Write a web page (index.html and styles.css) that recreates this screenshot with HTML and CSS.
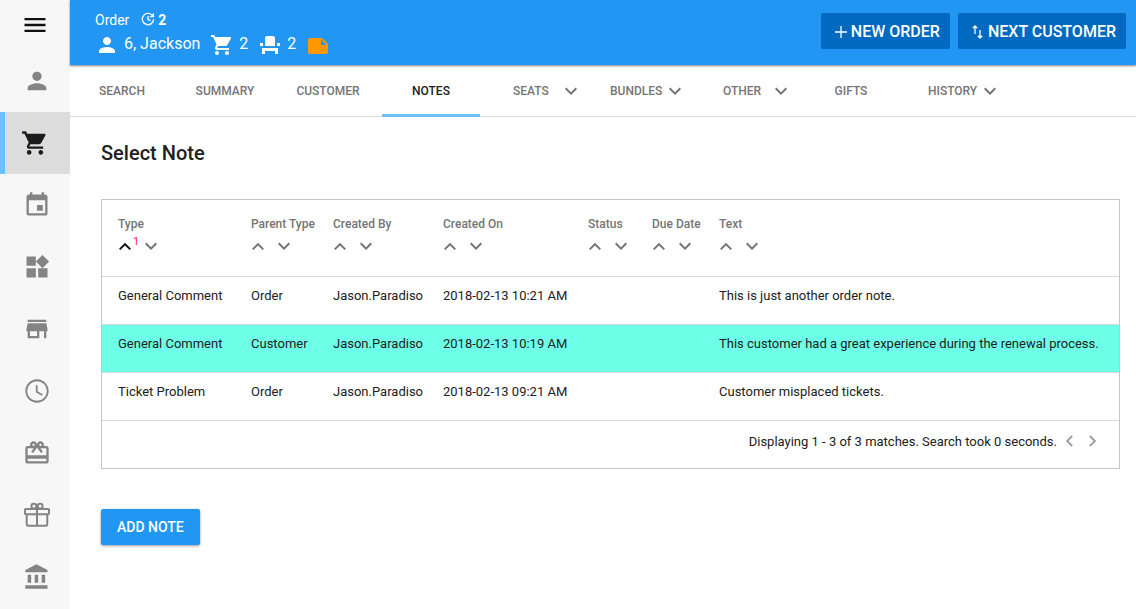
FILE: index.html
```html
<!DOCTYPE html>
<html lang="en">
<head>
<meta charset="utf-8">
<title>Order – Notes</title>
<link rel="stylesheet" href="styles.css">
</head>
<body>
<svg class="defs" aria-hidden="true">
  <symbol id="person" viewBox="0 0 24 24"><path d="M12 12c2.21 0 4-1.79 4-4s-1.79-4-4-4-4 1.790-4 4 1.790 4 4 4zm0 2c-2.670 0-8 1.340-8 4v2h16v-2c0-2.660-5.330-4-8-4z"/></symbol>
  <symbol id="cart" viewBox="0 0 24 24"><path d="M7 18c-1.100 0-1.990.9-1.990 2S5.900 22 7 22s2-.9 2-2-.9-2-2-2zM1 2v2h2l3.600 7.590-1.350 2.450c-.16.280-.25.610-.25.960 0 1.100.9 2 2 2h12v-2H7.420c-.14 0-.25-.110-.25-.25l.03-.120.9-1.630h7.450c.75 0 1.410-.410 1.750-1.030l3.580-6.490c.080-.140.120-.310.120-.480 0-.55-.45-1-1-1H5.210l-.94-2H1zm16 16c-1.100 0-1.990.9-1.990 2s.89 2 1.990 2 2-.9 2-2-.9-2-2-2z"/></symbol>
  <symbol id="up" viewBox="0 0 24 24"><path d="M12 7l-9 9 2.100 2.100 6.900-6.900 6.900 6.900L21 16z"/></symbol>
  <symbol id="down" viewBox="0 0 24 24"><path d="M12 18l9-9-2.100-2.100-6.900 6.900-6.900-6.900L3 9z"/></symbol>
</svg>
<div class="app">
  <nav class="side" aria-label="Main">
    <button class="side-item side-menu" aria-label="Menu"><svg viewBox="0 0 24 24"><path d="M3 18h18v-2H3v2zm0-5h18v-2H3v2zm0-7v2h18V6H3z"/></svg></button>
    <a class="side-item" href="#" aria-label="Customers"><svg><use href="#person"/></svg></a>
    <a class="side-item side-active" href="#" aria-label="Orders"><svg><use href="#cart"/></svg></a>
    <a class="side-item" href="#" aria-label="Events"><svg viewBox="0 0 24 24"><path d="M17 12h-5v5h5v-5zM16 1v2H8V1H6v2H5c-1.110 0-1.990.9-1.990 2L3 19c0 1.100.89 2 2 2h14c1.100 0 2-.9 2-2V5c0-1.100-.9-2-2-2h-1V1h-2zm3 18H5V8h14v11z"/></svg></a>
    <a class="side-item" href="#" aria-label="Bundles"><svg viewBox="0 0 24 24"><path d="M13 13v8h8v-8h-8zM3 21h8v-8H3v8zM3 3v8h8V3H3zm13.660-1.310L11 7.340 16.660 13l5.660-5.660-5.660-5.650z"/></svg></a>
    <a class="side-item" href="#" aria-label="Store"><svg viewBox="0 0 24 24"><path d="M20 4H4v2h16V4zm1 10v-2l-1-5H4l-1 5v2h1v6h10v-6h4v6h2v-6h1zm-9 4H6v-4h6v4z"/></svg></a>
    <a class="side-item" href="#" aria-label="Schedule"><svg viewBox="0 0 24 24"><path d="M11.990 2C6.470 2 2 6.480 2 12s4.470 10 9.990 10C17.520 22 22 17.520 22 12S17.520 2 11.990 2zM12 20.400a8.400 8.400 0 1 1 0-16.800 8.400 8.400 0 0 1 0 16.800zM12.500 7H11v6l5.250 3.150.75-1.230-4.500-2.670z"/></svg></a>
    <a class="side-item" href="#" aria-label="Gift cards"><svg viewBox="0 0 24 24"><path d="M20 6h-2.180c.11-.310.18-.650.18-1 0-1.660-1.340-3-3-3-1.050 0-1.960.54-2.500 1.350l-.5.670-.5-.680C10.960 2.540 10.050 2 9 2 7.340 2 6 3.340 6 5c0 .35.070.69.180 1H4c-1.110 0-1.990.89-1.990 2L2 19c0 1.110.89 2 2 2h16c1.110 0 2-.89 2-2V8c0-1.110-.89-2-2-2zm-5-2c.55 0 1 .45 1 1s-.45 1-1 1-1-.45-1-1 .45-1 1-1zM9 4c.55 0 1 .45 1 1s-.45 1-1 1-1-.45-1-1 .45-1 1-1zm11 15H4v-2h16v2zm0-5H4V8h5.080L7 10.830 8.620 12 11 8.760l1-1.360 1 1.360L15.380 12 17 10.830 14.920 8H20v6z"/></svg></a>
    <a class="side-item" href="#" aria-label="Gifts"><svg class="line" viewBox="0 0 24 24"><rect x="1.700" y="6.800" width="20.600" height="4.600" rx=".8"/><path d="M3.200 11.500V20a1.300 1.300 0 0 0 1.300 1.300h15a1.300 1.300 0 0 0 1.300-1.300v-8.500M12 7v14"/><circle cx="9.300" cy="4.500" r="2.100"/><circle cx="14.700" cy="4.500" r="2.100"/></svg></a>
    <a class="side-item" href="#" aria-label="Accounts"><svg viewBox="0 0 24 24"><path d="M4 10v7h3v-7H4zm6 0v7h3v-7h-3zM2 22h19v-3H2v3zm14-12v7h3v-7h-3zm-4.500-9L2 6v2h19V6l-9.500-5z"/></svg></a>
  </nav>
  <div class="page">
    <header class="top">
      <div class="info">
        <div class="info-order">
          <span>Order</span>
          <svg class="refresh" viewBox="0 0 24 24"><path d="M20.500 12.500a8.500 8.500 0 1 1-2.700-6.700"/><path d="M12 7.500v5l3.500 2"/><path class="solid" d="M21 2.500v7h-7z"/></svg>
          <b>2</b>
        </div>
        <div class="info-customer">
          <svg><use href="#person"/></svg><span>6, Jackson</span>
          <svg><use href="#cart"/></svg><span>2</span>
          <svg viewBox="0 0 24 24"><path d="M4 18v3h3v-3h10v3h3v-6H4zm15-8h3v3h-3zM2 10h3v3H2zm15 3H7V5c0-1.100.9-2 2-2h6c1.100 0 2 .9 2 2v8z"/></svg><span>2</span>
          <svg class="note" viewBox="0 0 24 24"><path d="M22 10l-6-6H4c-1.100 0-2 .9-2 2v12.010c0 1.100.9 1.990 2 1.990l16-.010c1.100 0 2-.89 2-1.990v-8zm-7-4.500l5.500 5.500H15V5.500z"/></svg>
        </div>
      </div>
      <div class="actions">
        <button class="action"><svg viewBox="0 0 14 14"><path d="M7 1v12M1 7h12"/></svg>NEW ORDER</button>
        <button class="action"><svg viewBox="0 0 14 14"><path d="M4 9V1M1.800 3.200L4 1l2.200 2.200M9 5v8M6.800 10.800L9 13l2.200-2.200"/></svg>NEXT CUSTOMER</button>
      </div>
    </header>
    <nav class="tabs" aria-label="Order sections">
      <button class="tab">SEARCH</button>
      <button class="tab">SUMMARY</button>
      <button class="tab">CUSTOMER</button>
      <button class="tab tab-active">NOTES</button>
      <button class="tab tab-drop"><span>SEATS</span><svg><use href="#down"/></svg></button>
      <button class="tab tab-drop"><span>BUNDLES</span><svg><use href="#down"/></svg></button>
      <button class="tab tab-drop"><span>OTHER</span><svg><use href="#down"/></svg></button>
      <button class="tab">GIFTS</button>
      <button class="tab tab-drop"><span>HISTORY</span><svg><use href="#down"/></svg></button>
    </nav>
    <main class="content">
      <h1>Select Note</h1>
      <div class="panel">
        <table>
          <colgroup><col class="c-type"><col class="c-parent"><col class="c-by"><col class="c-on"><col class="c-status"><col class="c-due"><col></colgroup>
          <thead>
            <tr>
              <th>Type<div class="sort"><button class="sorted" aria-label="Sort ascending"><svg><use href="#up"/></svg></button><sup>1</sup><button aria-label="Sort descending"><svg><use href="#down"/></svg></button></div></th>
              <th>Parent Type<div class="sort"><button aria-label="Sort ascending"><svg><use href="#up"/></svg></button><button aria-label="Sort descending"><svg><use href="#down"/></svg></button></div></th>
              <th>Created By<div class="sort"><button aria-label="Sort ascending"><svg><use href="#up"/></svg></button><button aria-label="Sort descending"><svg><use href="#down"/></svg></button></div></th>
              <th>Created On<div class="sort"><button aria-label="Sort ascending"><svg><use href="#up"/></svg></button><button aria-label="Sort descending"><svg><use href="#down"/></svg></button></div></th>
              <th>Status<div class="sort"><button aria-label="Sort ascending"><svg><use href="#up"/></svg></button><button aria-label="Sort descending"><svg><use href="#down"/></svg></button></div></th>
              <th>Due Date<div class="sort"><button aria-label="Sort ascending"><svg><use href="#up"/></svg></button><button aria-label="Sort descending"><svg><use href="#down"/></svg></button></div></th>
              <th>Text<div class="sort"><button aria-label="Sort ascending"><svg><use href="#up"/></svg></button><button aria-label="Sort descending"><svg><use href="#down"/></svg></button></div></th>
            </tr>
          </thead>
          <tbody>
            <tr><td>General Comment</td><td>Order</td><td>Jason.Paradiso</td><td>2018-02-13 10:21 AM</td><td></td><td></td><td>This is just another order note.</td></tr>
            <tr class="selected"><td>General Comment</td><td>Customer</td><td>Jason.Paradiso</td><td>2018-02-13 10:19 AM</td><td></td><td></td><td>This customer had a great experience during the renewal process.</td></tr>
            <tr><td>Ticket Problem</td><td>Order</td><td>Jason.Paradiso</td><td>2018-02-13 09:21 AM</td><td></td><td></td><td>Customer misplaced tickets.</td></tr>
          </tbody>
        </table>
        <div class="pager">
          <span>Displaying 1 - 3 of 3 matches. Search took 0 seconds.</span>
          <button aria-label="Previous page"><svg viewBox="0 0 24 24"><path d="M15.800 6.200L14 4.400 6.400 12l7.600 7.600 1.800-1.800L10 12z"/></svg></button>
          <button aria-label="Next page"><svg viewBox="0 0 24 24"><path d="M8.200 6.200L10 4.400l7.600 7.600-7.600 7.600-1.800-1.800L14 12z"/></svg></button>
        </div>
      </div>
      <button class="add">ADD NOTE</button>
    </main>
  </div>
</div>
</body>
</html>
```
FILE: styles.css
```css
* { box-sizing: border-box; }
body {
  margin: 0;
  font: 13px/20px Roboto, "Liberation Sans", sans-serif;
  color: #212121;
  background: #fff;
}
button {
  margin: 0;
  padding: 0;
  border: 0;
  background: none;
  font: inherit;
  color: inherit;
}
svg { display: block; flex: none; fill: currentColor; }
.defs { position: absolute; width: 0; height: 0; }

.app { display: flex; min-height: 100vh; }

/* side bar */
.side {
  display: flex;
  flex-direction: column;
  flex: none;
  width: 70px;
  background: #f7f7f7;
}
.side-item {
  display: flex;
  align-items: center;
  justify-content: center;
  height: 62px;
  padding-left: 4px;
  color: #848484;
}
.side-item svg { width: 28px; height: 28px; }
.side-item .line { fill: none; stroke: currentColor; stroke-width: 1.7; }
.side-menu { height: 50px; padding: 0; color: #111; }
.side-active {
  padding: 0;
  color: #1c1c1c;
  background: #dcdcdc;
  box-shadow: inset 5px 0 #6ec1ff;
}
.page { flex: 1; min-width: 0; }

/* header */
.top {
  position: relative;
  display: flex;
  justify-content: space-between;
  align-items: flex-start;
  padding: 10px 10px 7px 25px;
  color: #fff;
  background: #2196f3;
  box-shadow: 0 1px 2px rgba(0, 0, 0, .5);
}
.info-order { display: flex; align-items: center; font-size: 14px; }
.refresh {
  width: 16px;
  height: 16px;
  margin: 0 2px 2px 11px;
  fill: none;
  stroke: currentColor;
  stroke-width: 2;
}
.refresh .solid { fill: currentColor; stroke: none; }
.info-order b { font-weight: 700; }
.info-customer {
  display: flex;
  align-items: center;
  height: 28px;
  font-size: 16px;
}
.info-customer svg { width: 24px; height: 24px; margin-top: 2px; }
.info-customer span { margin: 0 10px 0 5px; }
.info-customer .note { color: #ff9800; margin-top: 4px; }
.actions { display: flex; gap: 8px; padding-top: 3px; }
.action {
  display: flex;
  align-items: center;
  gap: 3px;
  height: 36px;
  padding: 1px 10px 0 13px;
  border-radius: 2px;
  background: #0069c0;
  font-size: 16px;
  font-weight: 500;
}
.action svg {
  width: 14px;
  height: 14px;
  fill: none;
  stroke: currentColor;
  stroke-width: 1.3;
}

/* tabs */
.tabs {
  display: grid;
  grid-template-columns: repeat(4, 98px) 92px 108px 107px 88px 98px;
  gap: 5px;
  height: 52px;
  padding-left: 3px;
  border-bottom: 1px solid #dcdcdc;
  font-size: 12px;
  font-weight: 500;
  color: #757575;
}
.tab { height: 52px; padding-top: 2px; border-bottom: 3px solid transparent; }
.tab-active { color: #212121; border-color: #6ec1ff; }
.tab-drop { display: flex; align-items: center; padding-left: 28px; text-align: left; }
.tab-drop span { min-width: 50px; padding-right: 5px; }
.tab-drop svg { width: 16px; height: 16px; }

/* content */
.content { padding: 24px 16px 24px 31px; }
h1 { margin: 0 0 34px; font-size: 20px; line-height: 24px; font-weight: 500; }
.panel { border: 1px solid #c6c6c6; }
table { width: 100%; table-layout: fixed; border-collapse: collapse; }
.c-type { width: 133px; }
.c-parent { width: 82px; }
.c-by { width: 110px; }
.c-on { width: 145px; }
.c-status { width: 64px; }
.c-due { width: 67px; }
th, td {
  padding: 9px 0 0 16px;
  border-bottom: 1px solid #d8d8d8;
  text-align: left;
  vertical-align: top;
  white-space: nowrap;
}
th {
  height: 76px;
  padding-top: 14px;
  font-size: 12px;
  font-weight: 500;
  color: #757575;
}
td { height: 48px; }
.selected { background: #6effe8; }
.sort { display: flex; gap: 10px; margin-left: -1px; padding-top: 4px; }
.sort svg { width: 16px; height: 16px; }
.sort .sorted { color: #111; }
.sort sup { width: 6px; margin: -2px -6px 0 -10px; font-size: 11px; line-height: 12px; font-weight: 400; color: #ff1f3d; }
.pager {
  display: flex;
  align-items: center;
  justify-content: flex-end;
  gap: 4px;
  height: 47px;
  padding: 0 18px 5px 0;
}
.pager button { margin-bottom: 2px; color: #9e9e9e; }
.pager svg { width: 18px; height: 18px; }
.add {
  margin-top: 40px;
  height: 36px;
  padding: 0 16px;
  border-radius: 2px;
  color: #fff;
  background: #2196f3;
  box-shadow: 0 1px 3px rgba(0, 0, 0, .4);
  font-size: 14px;
  font-weight: 500;
}
```
